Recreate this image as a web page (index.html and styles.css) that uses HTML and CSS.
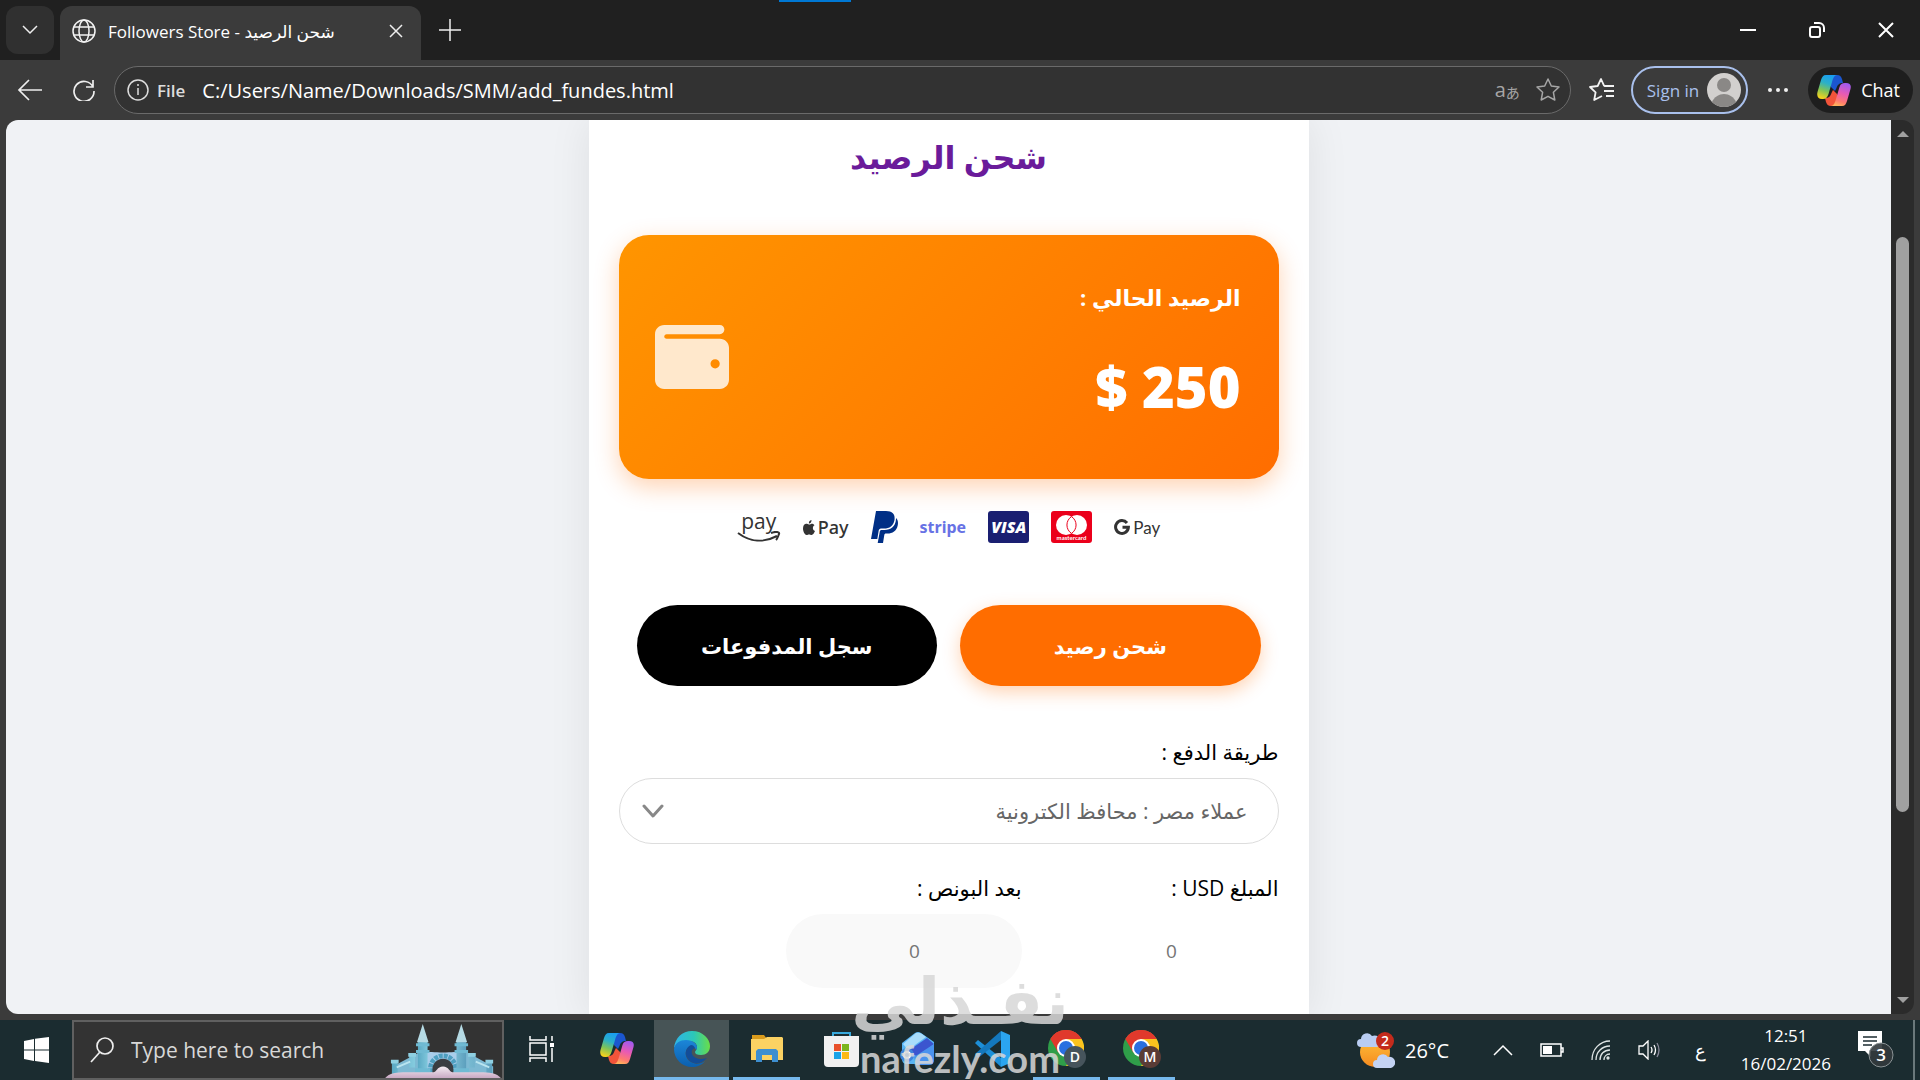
FILE: index.html
```html
<!DOCTYPE html>
<html lang="en">
<head>
    <meta charset="UTF-8">
    <meta name="viewport" content="width=device-width, initial-scale=1.0">
    <title>Followers Store - شحن الرصيد</title>
    <link rel="stylesheet" href="styles.css">
</head>
<body>
    <!-- shared icons -->
    <svg class="defs" width="0" height="0" aria-hidden="true">
        <defs>
            <linearGradient id="cpLeft" x1="0.6" y1="0" x2="0.3" y2="1">
                <stop offset="0" stop-color="#1a9df0"/>
                <stop offset="0.35" stop-color="#2bb0c8"/>
                <stop offset="0.65" stop-color="#7cc35a"/>
                <stop offset="1" stop-color="#f7d21c"/>
            </linearGradient>
            <linearGradient id="cpRight" x1="0.7" y1="0" x2="0.4" y2="1">
                <stop offset="0" stop-color="#a05af0"/>
                <stop offset="0.45" stop-color="#e85ab4"/>
                <stop offset="0.8" stop-color="#ff7a70"/>
                <stop offset="1" stop-color="#ffb05c"/>
            </linearGradient>
            <linearGradient id="edgeMain" x1="0" y1="0" x2="1" y2="0">
                <stop offset="0" stop-color="#2fb4e8"/>
                <stop offset="0.55" stop-color="#2cc7b8"/>
                <stop offset="1" stop-color="#69de48"/>
            </linearGradient>
            <linearGradient id="edgeLow" x1="0" y1="0" x2="0" y2="1">
                <stop offset="0" stop-color="#1c86d8"/>
                <stop offset="1" stop-color="#0b5fae"/>
            </linearGradient>
            <linearGradient id="ice" x1="0" y1="0" x2="1" y2="0">
                <stop offset="0" stop-color="#5aa9c4"/>
                <stop offset="0.4" stop-color="#a4e4f2"/>
                <stop offset="1" stop-color="#5c9fbd"/>
            </linearGradient>
            <linearGradient id="snow" x1="0" y1="0" x2="0" y2="1">
                <stop offset="0" stop-color="#f4ecf2"/>
                <stop offset="1" stop-color="#c9a9c4"/>
            </linearGradient>
            <linearGradient id="sun" x1="0" y1="0" x2="0" y2="1">
                <stop offset="0" stop-color="#ffc23a"/>
                <stop offset="1" stop-color="#f58a1f"/>
            </linearGradient>
        </defs>
        <symbol id="copilot" viewBox="0 0 34 31">
            <path d="M12 0H20C23 0 24 1.500 25 4L26 8C22 8 20.500 10 19.500 13L18 16L14 12Z" fill="#1b56cf"/>
            <path d="M22 31H14C11 31 10 29.500 9 27L8 23C12 23 13.500 21 14.500 18L16 15L20 19Z" fill="#f2543a"/>
            <path d="M9 0H20C17 0.500 16 3.500 15 7L11.500 19C10.500 22 9 24 6 24H5C1 24-0.500 21 0.500 17L4 5C5 2 6 0 9 0Z" fill="url(#cpLeft)"/>
            <path d="M25 31H14C17 30.500 18 27.500 19 24L22.500 12C23.500 9 25 8 28 8H29C33 8 34.500 10 33.500 14L30 26C29 29 28 31 25 31Z" fill="url(#cpRight)"/>
        </symbol>
        <symbol id="chrome" viewBox="0 0 36 36">
            <circle cx="18" cy="18" r="18" fill="#2f9e49"/>
            <path d="M18 18L2.400 9A18 18 0 0 1 33.600 9Z" fill="#e0392c"/>
            <path d="M18 9H33.600A18 18 0 0 1 18 36L25.800 22.500Z" fill="#fcc31e"/>
            <path d="M2.400 9L10.200 22.500L18 18V9H33.600A18 18 0 0 0 2.400 9Z" fill="#e0392c"/>
            <circle cx="18" cy="18" r="9" fill="#fff"/>
            <circle cx="18" cy="18" r="7" fill="#2a6fe0"/>
        </symbol>
    </svg>

    <header class="tab-strip">
        <button class="tab-menu" aria-label="Tab actions">
            <svg width="16" height="10" viewBox="0 0 16 10"><path d="M1 1l7 7 7-7" fill="none" stroke="#eee" stroke-width="1.500"/></svg>
        </button>
        <div class="tab">
            <svg width="24" height="24" viewBox="0 0 24 24" fill="none" stroke="#f2f2f2" stroke-width="1.500">
                <circle cx="12" cy="12" r="11"/>
                <ellipse cx="12" cy="12" rx="5" ry="11"/>
                <path d="M2 8h20M2 16h20"/>
            </svg>
            <span class="tab-title">Followers Store - شحن الرصيد</span>
            <button class="tab-close" aria-label="Close tab">
                <svg width="14" height="14" viewBox="0 0 14 14"><path d="M1 1l12 12M13 1L1 13" stroke="#eee" stroke-width="1.500"/></svg>
            </button>
        </div>
        <button class="new-tab" aria-label="New tab">
            <svg width="22" height="22" viewBox="0 0 22 22"><path d="M11 0v22M0 11h22" stroke="#eee" stroke-width="1.500"/></svg>
        </button>
        <span class="tab-accent"></span>
        <div class="window-controls">
            <button aria-label="Minimize"><svg width="16" height="16" viewBox="0 0 16 16"><path d="M0 8h16" stroke="#fff" stroke-width="2"/></svg></button>
            <button aria-label="Restore">
                <svg width="16" height="16" viewBox="0 0 16 16" fill="none" stroke="#fff" stroke-width="2">
                    <rect x="1" y="5" width="10" height="10" rx="2"/>
                    <path d="M5 1h5a5 5 0 0 1 5 5v4"/>
                </svg>
            </button>
            <button aria-label="Close"><svg width="16" height="16" viewBox="0 0 16 16"><path d="M1 1l14 14M15 1L1 15" stroke="#fff" stroke-width="2"/></svg></button>
        </div>
    </header>

    <nav class="toolbar">
        <button class="nav-btn" aria-label="Back">
            <svg width="26" height="22" viewBox="0 0 26 22" fill="none" stroke="#eee" stroke-width="1.700"><path d="M25 11H2M12 1L2 11l10 10"/></svg>
        </button>
        <button class="nav-btn" aria-label="Refresh">
            <svg width="22" height="22" viewBox="0 0 22 22" fill="none" stroke="#eee" stroke-width="1.700"><path d="M20 8A10 10 0 1 0 21 12M20 1v7h-7"/></svg>
        </button>
        <div class="address">
            <svg width="22" height="22" viewBox="0 0 22 22" fill="none" stroke="#ddd" stroke-width="1.500"><circle cx="11" cy="11" r="10"/><path d="M11 9v7M11 5v2"/></svg>
            <label for="url">File</label>
            <input id="url" type="text" value="C:/Users/Name/Downloads/SMM/add_fundes.html">
            <button class="translate" aria-label="Translate">a<small>あ</small></button>
            <button aria-label="Add to favorites">
                <svg width="24" height="24" viewBox="0 0 24 24" fill="none" stroke="#a6a6a6" stroke-width="1.500" stroke-linejoin="round"><path d="M12 1l3.300 7 7.700 1-5.600 5.300 1.400 7.700L12 18.300 5.200 22l1.400-7.700L1 9l7.700-1z"/></svg>
            </button>
        </div>
        <button class="favorites" aria-label="Favorites">
            <svg width="26" height="24" viewBox="0 0 26 24" fill="none" stroke="#f2f2f2" stroke-width="1.800" stroke-linejoin="round"><path d="M17 8l-2-.300L12 1 8.700 8 1 9l5.600 5.300L5.200 22l7.800-4M15 8h10M15 13h10M17 18h8"/></svg>
        </button>
        <button class="sign-in">Sign in
            <svg width="34" height="34" viewBox="0 0 34 34"><circle cx="17" cy="17" r="17" fill="#d2d0ce"/><circle cx="17" cy="12" r="7" fill="#8a8886"/><path d="M5 29c2-5 7-8 12-8s10 3 12 8a17 17 0 0 1-24 0z" fill="#8a8886"/></svg>
        </button>
        <button class="more" aria-label="Settings and more">
            <svg width="20" height="4" viewBox="0 0 20 4" fill="#eee"><circle cx="2" cy="2" r="2"/><circle cx="10" cy="2" r="2"/><circle cx="18" cy="2" r="2"/></svg>
        </button>
        <button class="chat"><svg width="34" height="31"><use href="#copilot"/></svg>Chat</button>
    </nav>

    <div class="viewport">
        <main class="page" dir="rtl" lang="ar">
            <div class="container">
                <h1>شحن الرصيد</h1>

                <section class="balance">
                    <div>
                        <p class="balance-label">الرصيد الحالي :</p>
                        <p class="balance-value" dir="ltr">$ 250</p>
                    </div>
                    <svg width="74" height="64" viewBox="0 0 512 448" preserveAspectRatio="none" fill="#fff" fill-opacity="0.8">
                        <path d="M64 0C28 0 0 28 0 64v320c0 36 28 64 64 64h384c36 0 64-28 64-64V160c0-36-28-64-64-64H80c-9 0-16-7-16-16s7-16 16-16h368c18 0 32-14 32-32S466 0 448 0H64zm352 240a32 32 0 1 1 0 64 32 32 0 1 1 0-64z"/>
                    </svg>
                </section>

                <div class="payments" dir="ltr">
                    <span class="amazon">pay
                        <svg width="44" height="12" viewBox="0 0 44 12" fill="none" stroke="#333" stroke-width="2"><path d="M1 2C13 11 27 12 40 5M34 2c5-2 9-1 8 1s-1 4-3 6"/></svg>
                    </span>
                    <span class="apple">
                        <svg width="12" height="15" viewBox="0 0 12 15" fill="#333"><path d="M8.500 0C6.500.400 5.700 2 5.900 3.500 7.600 3.400 8.700 1.900 8.500 0zM6 4.500C5 4.500 4.300 3.700 3 3.800 1 4 0 6 0 8.500 0 11.500 2 15 3.600 15c1 0 1.400-.600 2.500-.600s1.400.600 2.500.600C10 15 11.300 12.700 12 11 9.300 10 9.200 6.500 11.500 5.200 10.300 3.700 8.800 3.700 8 3.900 7.200 4.100 6.600 4.500 6 4.500z"/></svg>Pay
                    </span>
                    <svg width="27" height="32" viewBox="0 0 27 32" fill="#002f86">
                        <path d="M5 0H15C21 0 24.500 3 23.500 9C22.500 15 18.500 17.500 13 17.500H10C8.500 17.500 8 18.500 7.700 19.500L6.300 28H0Z"/>
                        <path d="M25 7C27 9 27.300 11.500 26.700 14.500C25.600 20 21.500 22.500 16.500 22.500H15C14 22.500 13.500 23 13.300 24L12 32H6.700L8.800 20.500C9 19.500 9.700 19 10.500 19H13.500C20 19 24.500 15.500 25 8Z"/>
                    </svg>
                    <span class="stripe">stripe</span>
                    <span class="visa">VISA</span>
                    <svg width="41" height="32" viewBox="0 0 41 32">
                        <rect width="41" height="32" rx="3" fill="#eb001b"/>
                        <circle cx="15" cy="14" r="10" fill="#fff"/>
                        <circle cx="26" cy="14" r="10" fill="#fff"/>
                        <path d="M20.500 5.600a10 10 0 0 1 0 16.800 10 10 0 0 1 0-16.800z" fill="#fff" stroke="#eb001b"/>
                        <text x="20.500" y="29" text-anchor="middle" class="mc-text">mastercard</text>
                    </svg>
                    <span class="gpay">
                        <svg width="16" height="16" viewBox="0 0 16 16" fill="none" stroke="#333" stroke-width="3"><path d="M13 4A6.400 6.400 0 1 0 14.400 8.200H8.500"/></svg>Pay
                    </span>
                </div>

                <div class="actions">
                    <button class="btn btn-primary">شحن رصيد</button>
                    <button class="btn btn-dark">سجل المدفوعات</button>
                </div>

                <form class="fund-form">
                    <label for="method">طريقة الدفع :</label>
                    <div class="select-wrap">
                        <select id="method">
                            <option>عملاء مصر : محافظ الكترونية</option>
                        </select>
                        <svg width="22" height="14" viewBox="0 0 22 14" fill="none" stroke="#888" stroke-width="3" stroke-linecap="round" stroke-linejoin="round"><path d="M2 2l9 10 9-10"/></svg>
                    </div>
                    <div class="amounts">
                        <div class="field">
                            <label for="amount">المبلغ USD :</label>
                            <input id="amount" type="text" placeholder="0">
                        </div>
                        <div class="field">
                            <label for="bonus">بعد البونص :</label>
                            <input id="bonus" class="filled" type="text" placeholder="0" readonly>
                        </div>
                    </div>
                </form>
            </div>
        </main>
        <div class="scrollbar">
            <svg width="12" height="6" viewBox="0 0 12 6" fill="#a0a0a0"><path d="M6 0l6 6H0z"/></svg>
            <div class="track"><div class="thumb"></div></div>
            <svg width="12" height="6" viewBox="0 0 12 6" fill="#a0a0a0"><path d="M6 6L0 0h12z"/></svg>
        </div>
    </div>

    <footer class="taskbar">
        <button class="start" aria-label="Start">
            <svg width="25" height="26" viewBox="0 0 25 26" fill="#fff"><path d="M0 4l10-2v10.500H0zM11 1.800L25 0v12.500H11zM0 13.500h10V24L0 22zM11 13.500h14V26l-14-2z"/></svg>
        </button>
        <div class="search">
            <svg width="24" height="26" viewBox="0 0 24 26" fill="none" stroke="#eee" stroke-width="1.700"><circle cx="15" cy="9" r="8"/><path d="M10 15L1 25"/></svg>
            <input type="text" placeholder="Type here to search" aria-label="Type here to search">
            <svg class="castle" width="118" height="54" viewBox="0 0 120 56">
                <path d="M8 44L34 30H86L112 44V54H8Z" fill="#7db9d3"/>
                <path d="M40 28c8 2 32 2 40 0v26H40z" fill="#a9cdea"/>
                <path d="M47 50V46a13 13 0 0 1 26 0v4" fill="none" stroke="#4f9fc0" stroke-width="5" stroke-dasharray="4 1"/>
                <path d="M49 54V47a11 11 0 0 1 22 0v7z" fill="#3a3d42"/>
                <path d="M34 53V18h10v35zM74 53V18h10v35z" fill="url(#ice)"/>
                <path d="M39 0l6 19H33zM79 0l6 19H73z" fill="#b5dae4"/>
                <path d="M32 20h14v3H32zM32 27h14v3H32zM72 20h14v3H72zM72 27h14v3H72zM31 46h16v6H31zM71 46h16v6H71z" fill="#6fbad3"/>
                <path d="M7 40h6v12H7zM25 33h6v12h-6zM87 33h6v12h-6zM105 40h6v12h-6z" fill="url(#ice)"/>
                <path d="M6 37h8v4H6zM24 30h8v4h-8zM86 30h8v4h-8zM104 37h8v4h-8z" fill="#8fd0e2"/>
                <path d="M12 45l14-6M108 45l-14-6" stroke="#b9e4ef" stroke-width="2"/>
                <path d="M0 56c4-5 12-6 22-6h28c3 0 4-6 10-6s7 6 10 6h28c10 0 18 1 22 6z" fill="url(#snow)"/>
            </svg>
        </div>
        <button class="app" aria-label="Task View">
            <svg width="26" height="26" viewBox="0 0 26 26" fill="none" stroke="#fff" stroke-width="1.500"><path d="M1 0v4h16V0M1 26v-4h16v4M1 7h16v12H1zM23 0v5M23 12v14"/><path d="M21 7h4v4h-4z" fill="#fff" stroke="none"/></svg>
        </button>
        <button class="app" aria-label="Copilot"><svg width="34" height="31"><use href="#copilot"/></svg></button>
        <button class="app active" aria-label="Microsoft Edge">
            <svg width="36" height="36" viewBox="0 0 36 36">
                <path d="M0 17C1 7 8 0 18 0c11 0 18 8 18 15 0 6-4 9-9 9-4 0-6-1-6-3 0-1 2-2 2-5 0-4-4-6-8-6-8 0-14 5-15 7z" fill="url(#edgeMain)"/>
                <path d="M0 18c1-6 6-9 12-9 7 0 11 4 11 7 0 1 0 2-1 3-1-3-5-5-8-2-4 3-3 11 3 14 5 3 10 2 14-1-3 4-8 6-13 6C8 36 0 28 0 18z" fill="url(#edgeLow)"/>
                <path d="M17 14c-5 2-7 9-3 14 4 6 13 6 19-1-6 2-13 1-15-4-1-3 0-5 3-6-1-2-2-3-4-3z" fill="#134d98"/>
            </svg>
        </button>
        <button class="app open" aria-label="File Explorer">
            <svg width="32" height="27" viewBox="0 0 32 27">
                <path d="M1 0h12l3 4H1z" fill="#d99b1c"/>
                <path d="M0 4h13l3-2h15l1 1v22H0z" fill="#fbd263"/>
                <path d="M5 27V16l2-2h18l2 2v11h-6v-7H11v7z" fill="#3d8fd1"/>
            </svg>
        </button>
        <button class="app" aria-label="Microsoft Store">
            <svg width="35" height="36" viewBox="0 0 35 36">
                <path d="M9 7V2h17v5" fill="none" stroke="#38a9dc" stroke-width="2"/>
                <path d="M0 5h35v27q0 4-4 4H4q-4 0-4-4z" fill="#f1f1f1"/>
                <path d="M10 13h7v7h-7z" fill="#e8502a"/><path d="M18 13h7v7h-7z" fill="#7ab51d"/>
                <path d="M10 21h7v7h-7z" fill="#1aa3e8"/><path d="M18 21h7v7h-7z" fill="#fbb915"/>
            </svg>
        </button>
        <button class="app" aria-label="Microsoft 365">
            <svg width="34" height="33" viewBox="0 0 34 33">
                <path d="M2 11L15 1q3-2 6 0l13 9v17q0 5-5 5H7q-5 0-5-5z" fill="#58b4f4"/>
                <path d="M3 12L16 1q3-1 6 1l4 3L8 18z" fill="#a9dcfb"/>
                <path d="M8 19L27 6l7 6-16 13z" fill="#3b55cf"/>
                <path d="M14 25l20-13v16q0 5-5 5H16z" fill="#4a93ee"/>
                <circle cx="7" cy="23" r="7" fill="#3f84dc"/><circle cx="7" cy="23" r="3" fill="none" stroke="#fff" stroke-width="2"/>
            </svg>
        </button>
        <button class="app" aria-label="Visual Studio Code">
            <svg width="36" height="36" viewBox="0 0 36 36">
                <path d="M1 12l3-3 23 18v9L2 13z" fill="#1d8fd8"/>
                <path d="M1 24l3 3L27 9V0L1 23z" fill="#1478bd"/>
                <path d="M27 0l9 4v28l-9 4z" fill="#2ba5f0"/>
            </svg>
        </button>
        <button class="app open" aria-label="Chrome, D">
            <svg width="38" height="38" viewBox="0 0 38 38"><use href="#chrome" width="36" height="36"/><circle cx="27" cy="27" r="11" fill="#46545c"/><text x="27" y="32" text-anchor="middle" class="badge-text">D</text></svg>
        </button>
        <button class="app open" aria-label="Chrome, M">
            <svg width="38" height="38" viewBox="0 0 38 38"><use href="#chrome" width="36" height="36"/><circle cx="27" cy="27" r="11" fill="#5a3c36"/><text x="27" y="32" text-anchor="middle" class="badge-text">M</text></svg>
        </button>

        <div class="tray">
            <button class="weather">
                <svg width="38" height="38" viewBox="0 0 38 38">
                    <circle cx="18" cy="21" r="15" fill="url(#sun)"/>
                    <path d="M4 16a4 4 0 0 1 0-8 6 6 0 0 1 11-3 5 5 0 0 1 5 11z" fill="#b9cdf2"/>
                    <path d="M20 37a4 4 0 0 1 0-8 6 6 0 0 1 11-3 5 5 0 0 1 3 11z" fill="#c3d3f3"/>
                    <circle cx="28" cy="10" r="9" fill="#c42b1c"/>
                    <text x="28" y="15" text-anchor="middle" class="badge-text">2</text>
                </svg>
                26°C
            </button>
            <button aria-label="Show hidden icons"><svg width="20" height="12" viewBox="0 0 20 12" fill="none" stroke="#fff" stroke-width="1.500"><path d="M1 11l9-9 9 9"/></svg></button>
            <button aria-label="Battery"><svg width="24" height="14" viewBox="0 0 24 14"><path d="M1 1h20v12H1zM21 5h2v4h-2" fill="none" stroke="#fff" stroke-width="1.500"/><path d="M3 3h9v8H3z" fill="#fff"/></svg></button>
            <button aria-label="Network">
                <svg width="20" height="20" viewBox="0 0 20 20" fill="none" stroke="#dfe5e5" stroke-width="1.300"><path d="M1 20C1 9 9 1 19 1M5 20c0-8 6-14 14-14M9 20c0-6 4-10 10-10M13 20c0-3 2-6 6-6"/><circle cx="17" cy="18" r="1" fill="#fff"/></svg>
            </button>
            <button aria-label="Volume">
                <svg width="22" height="20" viewBox="0 0 22 20" fill="none" stroke="#fff" stroke-width="1.300"><path d="M1 6h4l5-5v18l-5-5H1zM13 7q2 3 0 6M16 5q3 5 0 10"/><path d="M19 3q4 7 0 14" stroke="#889"/></svg>
            </button>
            <button class="lang">ع</button>
            <time class="clock"><span>12:51</span><span>16/02/2026</span></time>
            <button class="notify" aria-label="3 notifications">
                <svg width="36" height="38" viewBox="0 0 36 38">
                    <path d="M0 0h24v20H13v6l-6-6H0z" fill="#fff"/>
                    <path d="M5 6h14M5 10h14M5 14h9" stroke="#1d2d32" stroke-width="1.500"/>
                    <circle cx="23" cy="24" r="12" fill="#333a3d" fill-opacity="0.900" stroke="#8a9294"/>
                    <text x="23" y="30" text-anchor="middle" class="notify-text">3</text>
                </svg>
            </button>
            <span class="show-desktop"></span>
        </div>
    </footer>

    <div class="watermark">
        <span class="watermark-ar" lang="ar" dir="rtl">نفـذلي</span>
        <span class="watermark-en">nafezly.com</span>
    </div>
</body>
</html>
```
FILE: styles.css
```css
* {
    box-sizing: border-box;
}
body {
    margin: 0;
    height: 100vh;
    display: flex;
    flex-direction: column;
    overflow: hidden;
    background-color: #3b3b3b;
    color: #fff;
    font-family: "Open Sans", "DejaVu Sans", sans-serif;
    font-size: 18px;
}
button {
    display: flex;
    align-items: center;
    justify-content: center;
    padding: 0;
    border: none;
    background: none;
    color: inherit;
    font: inherit;
    cursor: pointer;
}
input,
select {
    min-width: 0;
    border: none;
    outline: none;
    background: none;
    color: inherit;
    font: inherit;
}
p,
h1 {
    margin: 0;
}
svg {
    flex-shrink: 0;
}
.defs {
    position: absolute;
}

/* tabs */
.tab-strip {
    position: relative;
    display: flex;
    align-items: stretch;
    flex-shrink: 0;
    height: 60px;
    padding: 6px 0 0 6px;
    background-color: #202020;
}
.tab-menu {
    width: 48px;
    height: 48px;
    margin-right: 6px;
    border-radius: 12px;
    background-color: #303030;
}
.tab {
    display: flex;
    align-items: center;
    gap: 12px;
    width: 361px;
    padding: 0 18px 4px 12px;
    border-radius: 12px 12px 0 0;
    background-color: #3b3b3b;
}
.tab-title {
    flex: 1;
    font-size: 17px;
    white-space: nowrap;
}
.new-tab {
    width: 58px;
    padding-bottom: 6px;
}
.tab-accent {
    position: absolute;
    top: 0;
    left: 779px;
    width: 72px;
    height: 2px;
    background-color: #0078d4;
}
.window-controls {
    display: flex;
    margin-left: auto;
}
.window-controls button {
    width: 69px;
    padding-bottom: 6px;
}

/* toolbar */
.toolbar {
    display: flex;
    align-items: center;
    flex-shrink: 0;
    height: 60px;
    padding-right: 7px;
}
.nav-btn {
    width: 54px;
    height: 48px;
    padding-left: 5px;
}
.address {
    flex: 1;
    display: flex;
    align-items: center;
    height: 48px;
    margin: 0 18px 0 6px;
    padding: 0 10px 0 12px;
    border: 1px solid #6a6a6a;
    border-radius: 24px;
    background-color: #323232;
}
.address label {
    margin: 0 17px 0 8px;
    color: #ddd;
    font-size: 17px;
    font-weight: 600;
}
.address input {
    flex: 1;
    padding: 0;
    font-size: 20px;
}
.address button {
    margin-left: 16px;
}
.address .translate {
    color: #a6a6a6;
    font-family: "Open Sans", "Noto Sans CJK JP", sans-serif;
    font-size: 20px;
    line-height: 24px;
}
.translate small {
    padding-top: 6px;
    font-size: 14px;
}
.favorites {
    margin-right: 16px;
}
.sign-in {
    gap: 8px;
    height: 48px;
    padding: 0 5px 0 14px;
    border: 2px solid #a9c0ec;
    border-radius: 24px;
    color: #a9c0ec;
    font-size: 17px;
}
.more {
    width: 60px;
}
.chat {
    gap: 10px;
    height: 46px;
    padding: 0 13px 0 9px;
    border-radius: 23px;
    background-color: #1e1e1e;
}

/* page area */
.viewport {
    flex: 1;
    display: flex;
    min-height: 0;
    margin: 0 6px 6px;
    border-radius: 12px;
    overflow: hidden;
    background-color: #2b2b2b;
}
.page {
    flex: 1;
    overflow: hidden;
    background-color: #f0f2f5;
    color: #000;
}
.container {
    max-width: 720px;
    min-height: 100%;
    margin: auto;
    padding: 13px 30px 30px;
    background-color: #fff;
    box-shadow: 0 0 40px rgba(0, 0, 0, 0.08);
}
h1 {
    margin-bottom: 54px;
    color: #6a1b9a;
    font-size: 32px;
    line-height: 48px;
    text-align: center;
}
.balance {
    display: flex;
    align-items: center;
    justify-content: space-between;
    min-height: 244px;
    padding: 33px 38px 33px 36px;
    border-radius: 30px;
    background: linear-gradient(135deg, #ff9500, #ff6d00);
    box-shadow: 0 8px 25px rgba(255, 109, 0, 0.3);
    color: #fff;
}
.balance-label {
    font-size: 22px;
    font-weight: bold;
    line-height: 58px;
}
.balance-value {
    font-size: 56px;
    font-weight: 800;
    line-height: 120px;
    text-align: right;
}
.payments {
    display: flex;
    align-items: center;
    justify-content: center;
    gap: 22px;
    height: 32px;
    margin: 32px 0 62px;
    color: #333;
}
.amazon {
    display: flex;
    flex-direction: column;
    align-items: center;
    font-size: 21px;
    line-height: 20px;
}
.apple,
.gpay {
    display: flex;
    align-items: center;
    gap: 3px;
}
.apple {
    font-family: "Noto Sans", sans-serif;
    font-weight: 500;
}
.gpay {
    font-family: Lato, sans-serif;
    font-size: 17px;
}
.stripe {
    color: #6772e5;
    font-family: "Noto Sans", sans-serif;
    font-size: 16px;
    font-weight: bold;
}
.visa {
    padding: 0 3px;
    border-radius: 3px;
    background-color: #1a1f71;
    color: #fff;
    font-size: 16px;
    font-style: italic;
    font-weight: 800;
    line-height: 32px;
}
.mc-text {
    fill: #fff;
    font-family: Lato, sans-serif;
    font-size: 6px;
    font-weight: bold;
}
.actions {
    display: grid;
    grid-template-columns: 1fr 1fr;
    gap: 23px;
    padding: 0 18px;
    margin-bottom: 51px;
}
.btn {
    height: 81px;
    border-radius: 41px;
    color: #fff;
    font-size: 21px;
    font-weight: bold;
}
.btn-primary {
    background-color: #ff6d00;
    box-shadow: 0 6px 18px rgba(255, 109, 0, 0.3);
}
.btn-dark {
    background-color: #000;
}
.fund-form label {
    display: block;
    margin-bottom: 11px;
    font-size: 21px;
    line-height: 30px;
}
.select-wrap {
    display: flex;
    align-items: center;
    height: 66px;
    margin-bottom: 29px;
    padding: 0 30px 0 22px;
    border: 1px solid #ddd;
    border-radius: 33px;
}
.select-wrap select {
    flex: 1;
    height: 64px;
    appearance: none;
    color: #666;
    font-size: 21px;
}
.amounts {
    display: grid;
    grid-template-columns: repeat(2, 236px);
    gap: 21px;
}
.field input {
    width: 100%;
    height: 74px;
    padding: 0 0 0 22px;
    border-radius: 37px;
    color: #777;
    font-size: 19px;
    text-align: center;
}
.field .filled {
    background-color: #f9f9f9;
}
.scrollbar {
    display: flex;
    flex-direction: column;
    align-items: center;
    width: 23px;
    padding: 11px 0;
}
.track {
    flex: 1;
    width: 13px;
    padding: 100px 0 185px;
}
.thumb {
    height: 100%;
    border-radius: 7px;
    background-color: #a0a0a0;
}

/* taskbar */
.taskbar {
    display: flex;
    flex-shrink: 0;
    height: 60px;
    background-color: #1b2c30;
}
.start {
    width: 72px;
}
.search {
    display: flex;
    align-items: center;
    width: 432px;
    padding-left: 16px;
    border: 2px solid #606060;
    background-color: #333;
}
.search input {
    flex: 1;
    padding: 0 0 0 17px;
    font-size: 21px;
}
.search input::placeholder {
    color: #d8d8d8;
    opacity: 1;
}
.castle {
    align-self: flex-end;
}
.app {
    width: 75px;
    border-bottom: 3px solid transparent;
}
.app.active {
    border-color: #76b9ed;
    background-color: #475456;
}
.app.open {
    border-image: linear-gradient(90deg, transparent 7px, #76b9ed 7px, #76b9ed 68px, transparent 68px) 3;
}
.badge-text {
    fill: #fff;
    font-size: 14px;
    font-weight: 600;
}
.tray {
    display: flex;
    align-items: center;
    gap: 27px;
    margin-left: auto;
}
.weather {
    gap: 10px;
    margin-right: 17px;
    font-size: 20px;
}
.lang {
    padding: 0 8px;
}
.clock {
    display: grid;
    font-size: 17px;
    line-height: 28px;
    text-align: center;
}
.notify-text {
    fill: #fff;
    font-size: 17px;
    font-weight: 600;
}
.show-desktop {
    width: 7px;
    height: 60px;
    margin-left: -8px;
    border-left: 2px solid #6a787b;
}

/* site mark laid over the bottom of the screen */
.watermark {
    position: absolute;
    left: 0;
    right: 0;
    bottom: 0;
    display: flex;
    flex-direction: column;
    align-items: center;
    padding-bottom: 2px;
    color: #d8d8d8;
    opacity: 0.85;
    pointer-events: none;
}
.watermark-ar {
    font-family: "DejaVu Sans", sans-serif;
    font-size: 64px;
    font-weight: bold;
    line-height: 72px;
}
.watermark-en {
    font-family: Lato, sans-serif;
    font-size: 38px;
    font-weight: bold;
    line-height: 40px;
}
```
